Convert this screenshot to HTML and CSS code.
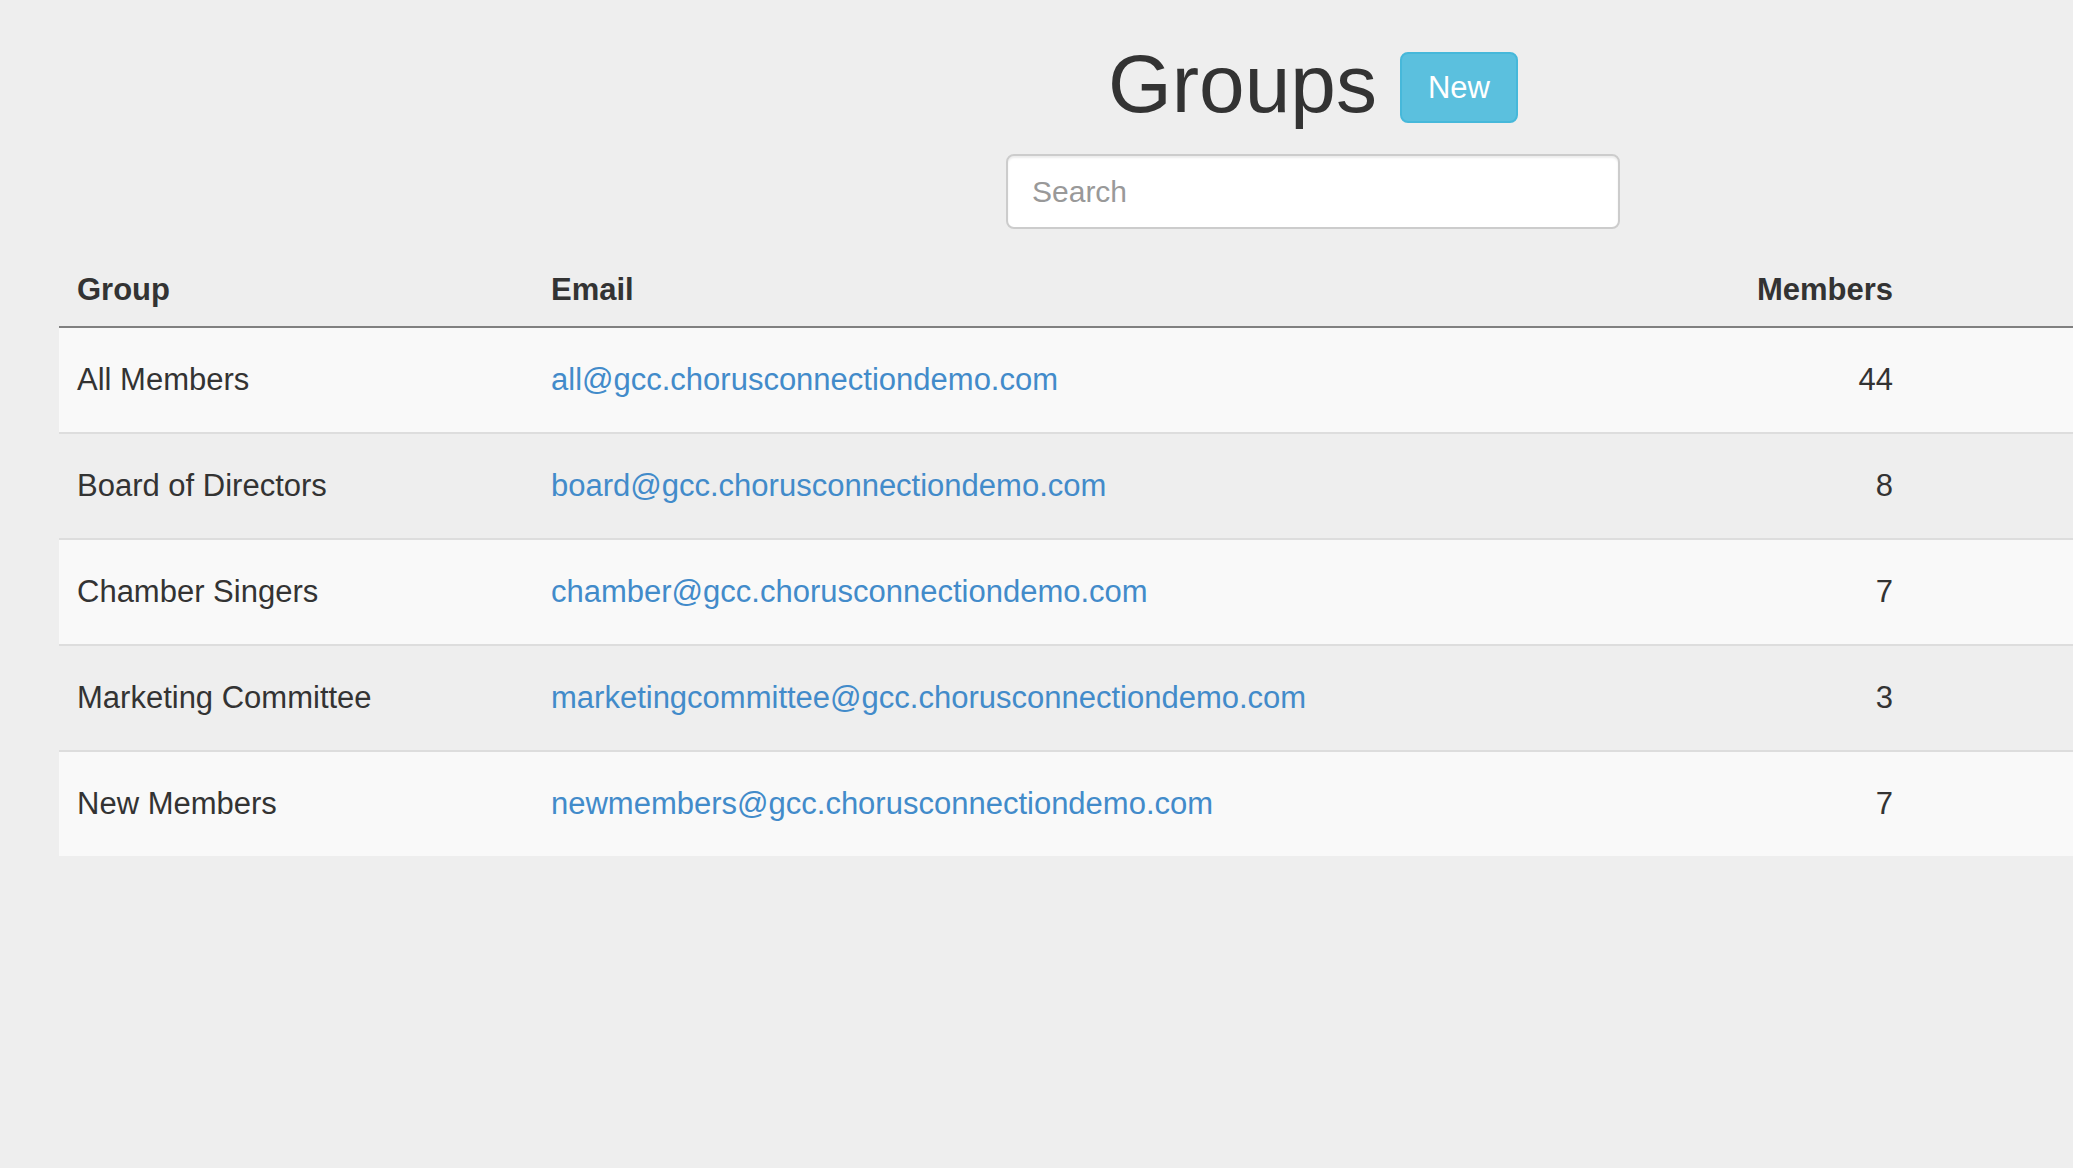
FILE: index.html
```html
<!DOCTYPE html>
<html lang="en">

  <head>
    <meta charset="UTF-8">
    <meta name="viewport" content="width=device-width, initial-scale=1.0">
    <title>Groups</title>
    <link rel="stylesheet" href="styles.css">
  </head>

  <body>
    <!-- title + new button, search under it -->
    <div class="page-head">
      <div class="title-row">
        <h1>Groups</h1>
        <a href="#" class="btn btn-info">New</a>
      </div>
      <input type="text" class="search" placeholder="Search">
    </div>

    <div class="groups">
      <table class="table">
        <colgroup>
          <col class="col-group">
          <col class="col-email">
          <col class="col-members">
          <col class="col-actions">
        </colgroup>
        <thead>
          <tr>
            <th>Group</th>
            <th>Email</th>
            <th class="num">Members</th>
            <th></th>
          </tr>
        </thead>
        <tbody>
          <tr>
            <td>All Members</td>
            <td><a href="#">all@gcc.chorusconnectiondemo.com</a></td>
            <td class="num">44</td>
            <td></td>
          </tr>
          <tr>
            <td>Board of Directors</td>
            <td><a href="#">board@gcc.chorusconnectiondemo.com</a></td>
            <td class="num">8</td>
            <td></td>
          </tr>
          <tr>
            <td>Chamber Singers</td>
            <td><a href="#">chamber@gcc.chorusconnectiondemo.com</a></td>
            <td class="num">7</td>
            <td></td>
          </tr>
          <tr>
            <td>Marketing Committee</td>
            <td><a href="#">marketingcommittee@gcc.chorusconnectiondemo.com</a></td>
            <td class="num">3</td>
            <td></td>
          </tr>
          <tr>
            <td>New Members</td>
            <td><a href="#">newmembers@gcc.chorusconnectiondemo.com</a></td>
            <td class="num">7</td>
            <td></td>
          </tr>
        </tbody>
      </table>
    </div>
  </body>

</html>
```

FILE: styles.css
```css
body {
  margin: 0;
  background: #eeeeee;
  color: #333;
  font-family: "Liberation Sans", Arial, Helvetica, sans-serif;
  font-size: 31px;
  line-height: 44px;
}

/* header is centred over the right part of the page */
.page-head {
  margin-left: 553px;
  padding-top: 39px;
}

.title-row {
  display: flex;
  justify-content: center;
  align-items: flex-start;
}

.title-row h1 {
  margin: 0;
  font-size: 82px;
  font-weight: 400;
  line-height: 90px;
}

.btn {
  display: inline-block;
  box-sizing: border-box;
  height: 71px;
  margin: 13px 0 0 23px;
  padding: 0 26px;
  border: 2px solid #46b8da;
  border-radius: 8px;
  font-size: 31px;
  line-height: 67px;
  text-decoration: none;
}

.btn-info {
  background: #5bc0de;
  color: #fff;
}

.search {
  display: block;
  box-sizing: border-box;
  width: 614px;
  height: 75px;
  margin: 25px auto 0;
  padding: 0 24px;
  border: 2px solid #cccccc;
  border-radius: 8px;
  background: #fff;
  box-shadow: inset 0 2px 2px rgba(0, 0, 0, 0.075);
  font-family: inherit;
  font-size: 30px;
  color: #555;
}

.search::placeholder {
  color: #999;
}

.groups {
  padding-left: 59px;
}

.table {
  width: 100%;
  table-layout: fixed;
  border-collapse: separate;
  border-spacing: 0;
}

.col-group {
  width: 474px;
}

.col-members {
  width: 200px;
}

.col-actions {
  width: 162px;
}

.table th {
  padding: 39px 18px 14px;
  border-bottom: 2px solid #808080;
  font-weight: 700;
  text-align: left;
  vertical-align: bottom;
}

.table td {
  padding: 30px 18px;
  border-bottom: 2px solid #dddddd;
  white-space: nowrap;
}

.table tbody tr:last-child td {
  border-bottom: 0;
}

.table tbody tr:nth-child(odd) td {
  background: #f9f9f9;
}

.table .num {
  text-align: right;
}

.table a {
  color: #428bca;
  text-decoration: none;
}
```
